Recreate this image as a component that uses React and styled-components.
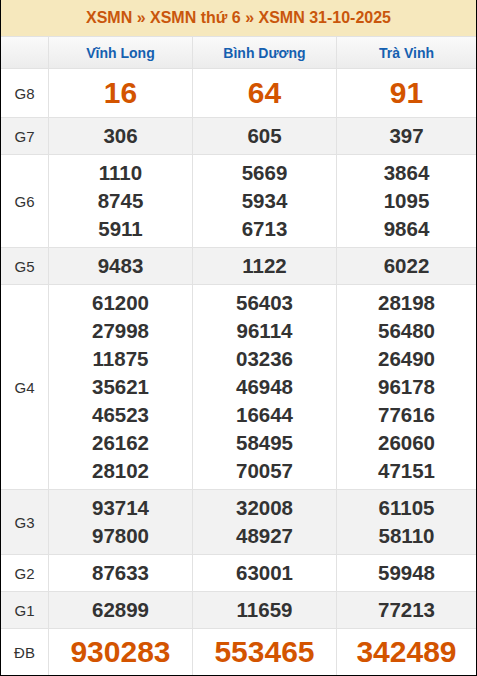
import React from 'react';
import styled, { createGlobalStyle } from 'styled-components';

const GlobalStyle = createGlobalStyle`
  html, body {
    margin: 0;
    padding: 0;
    background: #fff;
  }
  body {
    font-family: "Liberation Sans", Arial, sans-serif;
  }
`;

const provinces = ['Vĩnh Long', 'Bình Dương', 'Trà Vinh'];

const prizes = [
  { label: 'G8', big: true, values: [['16'], ['64'], ['91']] },
  { label: 'G7', values: [['306'], ['605'], ['397']] },
  {
    label: 'G6',
    values: [
      ['1110', '8745', '5911'],
      ['5669', '5934', '6713'],
      ['3864', '1095', '9864'],
    ],
  },
  { label: 'G5', values: [['9483'], ['1122'], ['6022']] },
  {
    label: 'G4',
    values: [
      ['61200', '27998', '11875', '35621', '46523', '26162', '28102'],
      ['56403', '96114', '03236', '46948', '16644', '58495', '70057'],
      ['28198', '56480', '26490', '96178', '77616', '26060', '47151'],
    ],
  },
  {
    label: 'G3',
    values: [
      ['93714', '97800'],
      ['32008', '48927'],
      ['61105', '58110'],
    ],
  },
  { label: 'G2', values: [['87633'], ['63001'], ['59948']] },
  { label: 'G1', values: [['62899'], ['11659'], ['77213']] },
  { label: 'ĐB', big: true, special: true, values: [['930283'], ['553465'], ['342489']] },
];

export default function App() {
  return (
    <>
      <GlobalStyle />
      <Board>
        <Title>
          <span>XSMN</span> » <span>XSMN thứ 6</span> » <span>XSMN 31-10-2025</span>
        </Title>
        <HeadRow>
          <HeadCell />
          {provinces.map((p) => (
            <HeadCell key={p}>{p}</HeadCell>
          ))}
        </HeadRow>
        {prizes.map((prize, i) => (
          <Row key={prize.label} $alt={i % 2 === 1} $last={prize.special}>
            <Label>{prize.label}</Label>
            {prize.values.map((col, j) => (
              <Cell key={j}>
                {col.map((n) => (
                  <Num key={n} $big={prize.big} $tall={prize.special}>
                    {n}
                  </Num>
                ))}
              </Cell>
            ))}
          </Row>
        ))}
      </Board>
    </>
  );
}

const Board = styled.div`
  width: 477px;
  box-sizing: border-box;
  border-left: 1px solid #000;
  border-right: 1px solid #000;
  border-bottom: 1px solid #000;
`;

const Title = styled.div`
  height: 36px;
  line-height: 36px;
  background: #f6e8bd;
  border-bottom: 1px solid #e2e2e2;
  text-align: center;
  font-size: 16px;
  font-weight: bold;
  color: #c9560c;
`;

const grid = `
  display: grid;
  grid-template-columns: 47px 144px 144px 1fr;
`;

const HeadRow = styled.div`
  ${grid}
  height: 31px;
  border-bottom: 1px solid #e2e2e2;
  background: linear-gradient(to bottom, #fafafa, #ececec);
`;

const HeadCell = styled.div`
  display: flex;
  align-items: center;
  justify-content: center;
  font-size: 14px;
  font-weight: bold;
  color: #1560b0;
  & + & {
    border-left: 1px solid #e2e2e2;
  }
`;

const Row = styled.div`
  ${grid}
  background: ${(p) => (p.$alt ? '#f2f2f2' : '#fff')};
  border-bottom: ${(p) => (p.$last ? 'none' : '1px solid #e2e2e2')};
`;

const Label = styled.div`
  display: flex;
  align-items: center;
  justify-content: center;
  font-size: 15px;
  color: #333;
`;

const Cell = styled.div`
  display: flex;
  flex-direction: column;
  align-items: center;
  justify-content: center;
  padding: 4px 0;
  border-left: 1px solid #e2e2e2;
`;

const Num = styled.div`
  font-weight: bold;
  font-size: ${(p) => (p.$big ? '30px' : '20.5px')};
  line-height: ${(p) => (p.$tall ? '38px' : p.$big ? '40px' : '28px')};
  color: ${(p) => (p.$big ? '#d35400' : '#333')};
`;
